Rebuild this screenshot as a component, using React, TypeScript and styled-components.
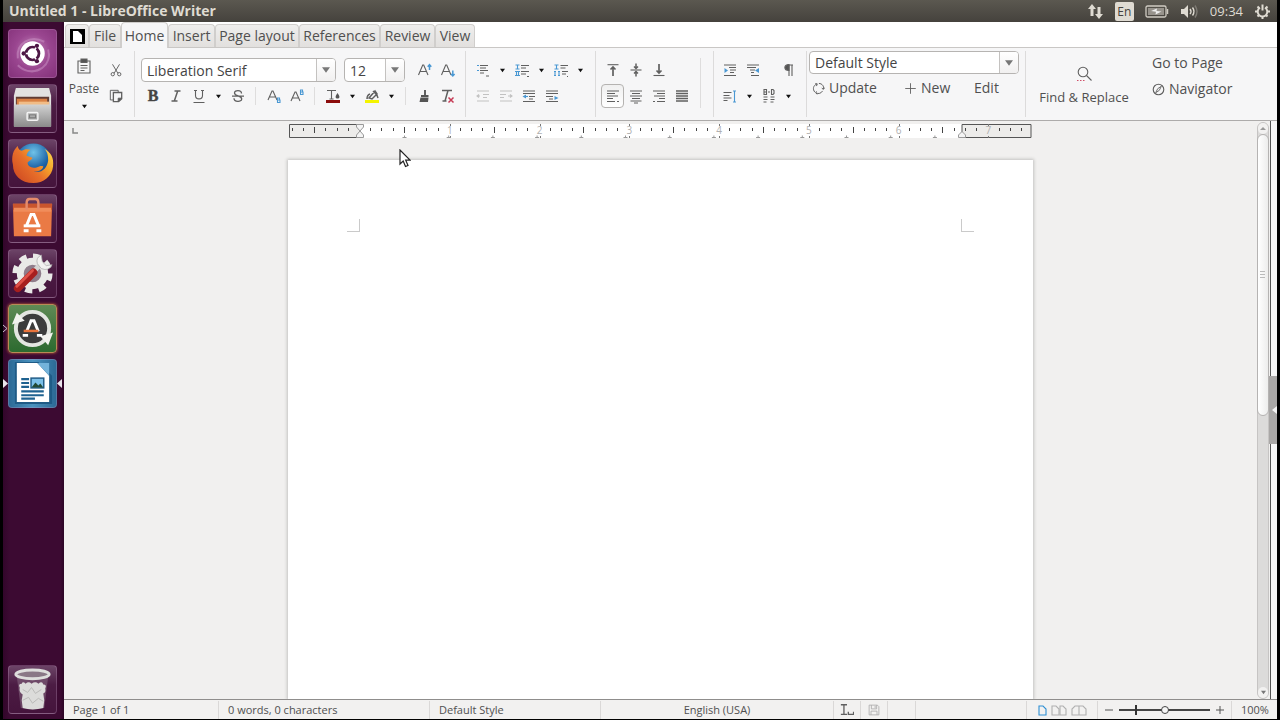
import React from 'react';
import styled, { createGlobalStyle, css } from 'styled-components';

const GlobalStyle = createGlobalStyle`
  * { box-sizing: border-box; }
  body { margin: 0; background: #000; overflow: hidden; }
  body, button, select, input { font-family: 'Open Sans', 'Noto Sans', sans-serif; }
  button { background: none; border: 0; padding: 0; color: inherit; font-size: inherit; line-height: inherit; }
  svg { display: block; flex: none; }
`;

const Desktop = styled.div`
  position: relative;
  display: flex;
  flex-direction: column;
  height: 100vh;
  border: solid #000;
  border-width: 0 3px 1px;
`;

/* Top panel */

const Panel = styled.header`
  display: flex;
  align-items: center;
  justify-content: space-between;
  height: 22px;
  flex: none;
  padding: 0 6px;
  background: linear-gradient(#5b5850, #45423d);
  color: #dfdbd2;
`;

const PanelTitle = styled.h1`
  margin: 0;
  font-size: 14px;
  line-height: 22px;
  font-weight: 700;
`;

const Indicators = styled.div`
  display: flex;
  align-items: center;
  gap: 11px;
`;

const Indicator = styled.button`
  display: flex;
  align-items: center;
  height: 20px;
  font-size: 13px;
`;

const Lang = styled.span`
  width: 19px;
  height: 19px;
  border-radius: 2px;
  background: #dfdbd2;
  color: #45423d;
  font-size: 12px;
  line-height: 19px;
  text-align: center;
`;

/* Launcher */

const Workspace = styled.div`
  display: flex;
  flex: 1;
  min-height: 0;
`;

const Launcher = styled.nav`
  display: flex;
  flex-direction: column;
  align-items: center;
  gap: 6px;
  width: 61px;
  flex: none;
  padding: 7px 2px 5px 0;
  background: linear-gradient(90deg, #32062a, #3c0a32 12%, #3c0a32 94%, #2c0525);
`;

const Tile = styled.button<{ $bg?: string; $glow?: boolean; $last?: boolean }>`
  position: relative;
  width: 49px;
  height: 49px;
  flex: none;
  border: 1px solid ${p => (p.$glow ? '#b98a55' : 'rgba(200, 160, 200, 0.28)')};
  border-radius: 4px;
  background: ${p => p.$bg ?? 'linear-gradient(#6c4467, #4c1c44 40%, #45143c)'};
  ${p => p.$glow && css`box-shadow: 0 0 3px #d2703a;`}
  ${p => p.$last && css`margin-top: auto;`}
`;

const Pip = styled.svg<{ $side: 'left' | 'right' }>`
  position: absolute;
  top: 19px;
  ${p => p.$side}: -7px;
`;

/* Writer window */

const Window = styled.main`
  display: flex;
  flex-direction: column;
  flex: 1;
  min-width: 0;
  background: #f1f0ef;
  color: #505050;
  font-size: 13px;
  line-height: 18px;
`;

const TabBar = styled.div`
  display: flex;
  align-items: flex-end;
  height: 26px;
  flex: none;
  padding-left: 1px;
  background: #fff;
  border-bottom: 1px solid #c9c7c5;
`;

const Tab = styled.button<{ $w: number; $active?: boolean }>`
  display: flex;
  align-items: center;
  justify-content: center;
  width: ${p => p.$w}px;
  height: 23px;
  border: 1px solid #d0cecc;
  border-bottom: 0;
  border-radius: 4px 4px 0 0;
  background: linear-gradient(#efeeed, #e2e0de);
  font-size: 14px;
  ${p => p.$active && css`
    height: 26px;
    margin-bottom: -1px;
    background: #f6f6f7;
  `}
`;

const Ribbon = styled.div`
  display: flex;
  height: 73px;
  flex: none;
  background: #f6f6f7;
  border-bottom: 1px solid #adabaa;
`;

const Group = styled.section<{ $w?: number; $pad?: number }>`
  display: flex;
  width: ${p => (p.$w ? p.$w + 'px' : 'auto')};
  flex: none;
  margin: 3px 0;
  padding-left: ${p => p.$pad ?? 5}px;
  border-right: 1px solid #dcdbdb;
  &:last-child { border-right: 0; }
`;

const Rows = styled.div`
  display: flex;
  flex-direction: column;
  padding-top: 6px;
`;

const Row = styled.div<{ $gap?: number }>`
  display: flex;
  align-items: center;
  gap: ${p => p.$gap ?? 0}px;
  height: 26px;
`;

const Tool = styled.button<{ $active?: boolean }>`
  display: flex;
  align-items: center;
  justify-content: center;
  width: 23px;
  height: 24px;
  border: 1px solid transparent;
  border-radius: 4px;
  ${p => p.$active && css`
    border-color: #b5b3b1;
    background: linear-gradient(#f0f0f0, #fff);
  `}
`;

const Arrow = styled.button`
  display: flex;
  justify-content: center;
  width: 16px;
`;

const Divider = styled.span<{ $tall?: boolean }>`
  width: 1px;
  height: ${p => (p.$tall ? 50 : 18)}px;
  margin: ${p => (p.$tall ? '7px 0 0 7px' : '0 6px')};
  background: #dedddd;
`;

const PasteButton = styled.button`
  display: flex;
  flex-direction: column;
  align-items: center;
  gap: 6px;
  width: 38px;
  padding: 7px 2px 0 0;
  font-size: 12px;
`;

const Combo = styled.span<{ $w: number; $h: number }>`
  display: grid;
  width: ${p => p.$w}px;
  height: ${p => p.$h}px;
  border: 1px solid #b6b4b2;
  border-radius: 4px;
  background: #fff;
  overflow: hidden;
  & > * { grid-area: 1 / 1; }
`;

const ComboSelect = styled.select`
  appearance: none;
  min-width: 0;
  border: 0;
  padding: 0 20px 0 5px;
  background: transparent;
  color: #444;
  font-size: 14px;
  outline: 0;
`;

const ComboArrow = styled.span`
  display: flex;
  align-items: center;
  justify-content: center;
  justify-self: end;
  width: 19px;
  border-left: 1px solid #c4c2c0;
  background: linear-gradient(#fff, #f1f0f0);
  pointer-events: none;
`;

const StyleSection = styled.section`
  flex: none;
  width: 219px;
  margin: 3px 0;
  padding-left: 2px;
  border-right: 1px solid #dcdbdb;
`;

const StyleGroup = styled.div`
  display: flex;
  flex-direction: column;
  gap: 4px;
  width: 210px;
`;

const StyleActions = styled.div`
  display: grid;
  grid-template-columns: 92px 70px 1fr;
  padding-left: 3px;
`;

const TextTool = styled.button`
  display: flex;
  align-items: center;
  gap: 4px;
  height: 20px;
  font-size: 14px;
`;

const FindButton = styled.button`
  display: flex;
  flex-direction: column;
  align-items: center;
  gap: 6px;
  width: 104px;
  padding-top: 15px;
`;

const NavLinks = styled.div`
  display: flex;
  flex-direction: column;
  gap: 6px;
  padding: 2px 0 0 16px;
`;

/* Document */

const Body = styled.div`
  display: flex;
  flex: 1;
  min-height: 0;
`;

const DocArea = styled.div`
  display: flex;
  flex-direction: column;
  align-items: center;
  flex: 1;
  min-width: 0;
  overflow: hidden;
`;

const RulerRow = styled.div`
  display: grid;
  grid-template-columns: 1fr auto 1fr;
  width: 100%;
  flex: none;
  height: 39px;
  padding: 3px 6px 0;
`;

const Page = styled.article`
  display: flex;
  justify-content: space-between;
  width: 745px;
  flex: 1;
  padding: 59px 59px 0;
  background: #fff;
  box-shadow: 0 0 3px 1px #c3c2c1;
`;

const Crop = styled.span<{ $side: 'left' | 'right' }>`
  width: 13px;
  height: 13px;
  border-bottom: 1px solid #cacaca;
  border-${p => (p.$side === 'left' ? 'right' : 'left')}: 1px solid #cacaca;
`;

const Scrollbar = styled.div`
  display: flex;
  flex-direction: column;
  width: 12px;
  flex: none;
  margin-top: 1px;
  border: 1px solid #c6c4c3;
  border-radius: 6px;
  background: #dcdbda;
`;

const ScrollStep = styled.button`
  display: flex;
  align-items: center;
  justify-content: center;
  height: 11px;
  border-radius: 6px;
  background: #f2f1f0;
`;

const Thumb = styled.div`
  display: flex;
  align-items: center;
  justify-content: center;
  flex: 281;
  border: 1px solid #b5b3b2;
  border-radius: 6px;
  margin: 0 -1px;
  background: linear-gradient(90deg, #fff, #ededec);
`;

const Track = styled.div`
  flex: 272;
`;

const Deck = styled.aside`
  display: flex;
  flex-direction: column;
  justify-content: center;
  width: 8px;
  flex: none;
  background: linear-gradient(90deg, #f1f0ef 1px, #555 1px, #555 2px, #f7f7f7 2px);
`;

const DeckHandle = styled.button`
  display: flex;
  align-items: center;
  justify-content: flex-end;
  height: 68px;
  background: #a9a7a6;
`;

/* Status bar */

const Status = styled.footer`
  display: flex;
  height: 20px;
  flex: none;
  padding: 1px 0 0;
  border-top: 1px solid #8f8d8c;
  background: #f2f1f0;
  font-size: 11px;
  line-height: 18px;
`;

const Cell = styled.div<{ $w?: number; $center?: boolean }>`
  display: flex;
  align-items: center;
  justify-content: ${p => (p.$center ? 'center' : 'flex-start')};
  gap: 4px;
  ${p => (p.$w ? `width: ${p.$w}px; flex: none;` : 'flex: 1;')}
  padding-left: ${p => (p.$center ? 0 : 9)}px;
  border-right: 1px solid #dad8d7;
  white-space: nowrap;
  &:last-child { border-right: 0; }
`;

const ZoomSlider = styled.input`
  appearance: none;
  width: 91px;
  height: 12px;
  margin: 0 2px;
  background:
    linear-gradient(#333, #333) 16px 1px / 2px 10px no-repeat,
    linear-gradient(#444, #444) 0 5px / 100% 2px no-repeat;
  &::-webkit-slider-thumb {
    appearance: none;
    width: 8px;
    height: 8px;
    border: 1px solid #444;
    border-radius: 50%;
    background: #f6f6f6;
  }
`;

const Pointer = styled.svg`
  position: absolute;
  left: 396px;
  top: 149px;
`;

/* Icons */

const Svg = ({ children, s = 16 }: { children: React.ReactNode; s?: number }) => (
  <svg width={s} height={s} viewBox="0 0 16 16" fill="none" stroke="#606060" strokeWidth="1.100" aria-hidden="true">{children}</svg>
);

const Down = ({ c = '#111', w = 5 }: { c?: string; w?: number }) => (
  <svg width={w} height={w} viewBox="0 0 6 6" aria-hidden="true"><path d="M0 1h6L3 5z" fill={c} /></svg>
);

const Drop = ({ label }: { label: string }) => <Arrow aria-label={label}><Down /></Arrow>;

const B = '#4a98d3';
const I: Record<string, React.ReactNode> = {
  cut: <Svg s={14}><path d="M4 1.500l6 10M12 1.500l-6 10" /><circle cx="4.300" cy="12.800" r="1.900" /><circle cx="11.700" cy="12.800" r="1.900" /></Svg>,
  copy: <Svg s={14}><path d="M4.500 12.500h-3v-11h9v2" /><path d="M5 4h9.500v7l-3.500 3.500H5z" strokeWidth="1.500" /><path d="M14.500 10.500h-4v4z" fill="#555" /></Svg>,
  bold: <Svg><text x="8" y="13" textAnchor="middle" fontFamily="Liberation Serif" fontWeight="700" fontSize="16" fill="#444" stroke="#444" strokeWidth=".4">B</text></Svg>,
  italic: <Svg><path d="M6.500 3h6M3.500 13h6M9.700 3l-3.400 10" strokeWidth="1.500" /></Svg>,
  underline: <Svg><path d="M3 2.500h3M10 2.500h3M4.500 2.500v5c0 4.500 7 4.500 7 0v-5M2.500 14.500h11" /></Svg>,
  strike: <Svg><path d="M11.500 5.500c0-3.800-7-3.700-7-.6 0 3.400 7.200 2.700 7.200 6 0 3.400-7.700 3.300-7.700-.6M2 8.200h12" strokeWidth="1.300" /></Svg>,
  sub: <Svg><path d="M2 12L6 3h1l4 9M3.500 9h6" /><path d="M11.500 9.500v5h2.500v-2.500h-2.500M11.500 10h2v2" stroke={B} /></Svg>,
  sup: <Svg><path d="M2 13L6 4h1l4 9M3.500 10h6" /><path d="M11.500 1.500v5h2.500V4h-2.500M11.500 2h2v2" stroke={B} /></Svg>,
  color: <Svg><path d="M2 2.500h9M6.500 2.500V11M4.500 11h4" /><path d="M12.500 5c3 4 2 5.500 0 5.500s-3-1.500 0-5.500z" fill="#555" stroke="none" /><path d="M1 13.500h14" stroke="#8b0c0c" strokeWidth="3" /></Svg>,
  mark: <Svg><path d="M3 11q0-4 3-5M5 10l6-7 2 3-5 5zM9 3l3 3M12.500 6l1.500 4" strokeWidth="1.500" /><path d="M1 13.500h14" stroke="#f4f400" strokeWidth="3" /></Svg>,
  brush: <Svg><path d="M9 2v5" strokeWidth="2" /><path d="M5 7h7.500v2H5zM4.500 9.500h8l-.5 4.500H3.500z" fill="#555" stroke="none" /></Svg>,
  clear: <Svg><path d="M3 2.500h10M9 2.500L6 13M3.500 13h4" strokeWidth="1.500" /><path d="M9.500 9.500l5 5M14.500 9.500l-5 5" stroke="#c63a55" strokeWidth="1.500" /></Svg>,
  grow: <Svg><path d="M1.500 13L5.700 3h1L11 13M3 9.500h6.500" /><path d="M12.500 8V3.500M10.700 4.700l1.800-2 1.800 2" stroke={B} strokeWidth="1.500" /></Svg>,
  shrink: <Svg><path d="M1.500 13L5.700 3h1L11 13M3 9.500h6.500" /><path d="M12.800 8.500V13M11 12l1.800 2 1.800-2" stroke={B} strokeWidth="1.500" /></Svg>,
  bullets: <Svg><path d="M5 3.500h8M5 6h6M5 8.500h8M5 11h4M11 14h3" /><path d="M2 3.500h2M2 8.500h2" stroke={B} /></Svg>,
  numbers: <Svg><path d="M7 3.500h8M7 6h5M7 9.500h8M7 12h5M13 14.500h2" /><path d="M1.500 3h4M3.500 3v4M1.500 7h4M1 9.500h5M2.500 9.500v4M4.500 9.500v4M1 13.500h5" stroke={B} /></Svg>,
  outline: <Svg><path d="M7.500 3.500h7.500M7.500 6h5M9 9.500h6M9 12h4M14 14.500h1" /><path d="M1.500 3h4M3.500 3v4M1.500 7h4M1 9.500h2M2 9.500v4M1 13.500h2M5 9.500h2M6 9.500v4M5 13.500h2" stroke={B} /></Svg>,
  promote: <Svg><path d="M2 3h12M8 6.500h6M8 9.500h4M2 13h12M2 8h3M4 6.500L2 8l2 1.500" stroke="#c2c2c2" /></Svg>,
  demote: <Svg><path d="M2 3h12M2 6.500h6M2 9.500h4M2 13h12M10 8h4M12 6.500L14 8l-2 1.500" stroke="#c2c2c2" /></Svg>,
  outdent: <Svg><path d="M2 3h12M2 5.500h12M8 8.500h6M8 11h4M2 13.500h12" /><path d="M1.500 8.500l3.500-2v4z" fill={B} stroke="none" /><path d="M4 8.500h3" stroke={B} /></Svg>,
  indent: <Svg><path d="M2 3h12M2 5.500h12M2 8.500h7M5 11h4M2 13.500h12" /><path d="M14.500 10l-4 2V8z" fill={B} stroke="none" /></Svg>,
  top: <Svg><path d="M2.500 2.700h11" /><path d="M8 14V4.500M5.500 7.500L8 5l2.500 2.500" strokeWidth="1.700" /></Svg>,
  middle: <Svg><path d="M2.500 8h11" /><path d="M8 1.500V7M8 9v5.500M6 4.500l2 2 2-2M6 11.500l2-2 2 2" strokeWidth="1.500" /></Svg>,
  bottom: <Svg><path d="M2.500 13.500h11" /><path d="M8 2v9M5.500 8.500L8 11l2.500-2.500" strokeWidth="1.700" /></Svg>,
  left: <Svg><path d="M2 3h12M2 5.500h8M2 8h11M2 10.500h6M2 13.500h8M12 13.500h2" /></Svg>,
  center: <Svg><path d="M2 3h12M4 5.500h8M2 8h12M4 10.500h8M2.500 13h11M6 15h4" /></Svg>,
  right: <Svg><path d="M2 3h12M6 5.500h8M3 8h11M8 10.500h6M2 13.500h2M6 13.500h8" /></Svg>,
  justify: <Svg><path d="M2 3h12M2 5.500h12M2 8h12M2 10.500h12M2 13h12" strokeWidth="1.400" /></Svg>,
  inc: <Svg><path d="M2 3h12M7 5.500h7M8 8h6M8 10.500h4M2 13.500h12" /><path d="M6 8.500L2.500 6v5z" fill={B} stroke="none" /></Svg>,
  dec: <Svg><path d="M2 3h12M2 5.500h9M5 8h5M6 10.500h3M6 13.500h8" /><path d="M10 8.500L14 6v5z" fill={B} stroke="none" /></Svg>,
  pilcrow: <Svg><path d="M8.500 3h4.500M9 3v11M12 3v11" /><path d="M9 2.500C3.500 2.500 3.500 8.500 9 8.500z" fill="#555" /></Svg>,
  spacing: <Svg><path d="M1.500 4.500h8M1.500 7.500h6M1.500 10h8M1.500 12.500h4" /><path d="M12.500 3v11M11 3h3M11 14h3" stroke={B} /></Svg>,
  wrap: <Svg><path d="M3 1.500v5h2.500v-5zM3 4h2.500M7 4h2M10.500 1.500v5h1.500l1-1v-3l-1-1z" /><path d="M2.500 9h4M2.500 11.500h4M2.500 14h3M9.500 9h4M9.500 11.500h4M9.500 14h3" /></Svg>,
  paste: <Svg><path d="M2 3h12v12H2z" /><path d="M5 1h6v3.500H5z" fill="#555" /><path d="M4.500 7.500h7M4.500 10h7M4.500 12.500h4" /></Svg>,
  update: <Svg s={13}><path d="M3.500 12.500C.5 9 1.500 4 6 2.500M4 2l2.500.3L5.500 5M8.500 1.800c4 0 6.500 3.500 5.700 7M15.500 7l-1.500 2-2-1.500M13 11c-1.700 3-5 4-8 2.500M5.500 11.500l-1 2 2 1.500" strokeWidth="1.200" /></Svg>,
  plus: <Svg s={13}><path d="M8 1.500v13M1.500 8h13" /></Svg>,
  nav: <Svg s={13}><circle cx="8" cy="8" r="6.500" strokeWidth="1.400" /><path d="M11.500 4L7 7l-2.500 5L9 9z" /></Svg>,
  find: <Svg><circle cx="7" cy="6" r="4.800" /><path d="M10.500 9.500l5 5" /><path d="M1 14.500h8" stroke="#d0506a" strokeDasharray="1.500 1.500" /></Svg>,
  insert: <Svg s={14}><path d="M1 2h7M4.500 2v11M1 13h7M9.500 10v3h6v-3" strokeWidth="1.500" /></Svg>,
  save: <Svg s={12}><path d="M1.500 1.500h11l2 2v11h-13zM4.500 1.500v5h7v-5M4 14.500v-5h8v5M9.500 2.500v3" stroke="#aaa" /></Svg>,
};

const T = ({ n, label, active }: { n: string; label: string; active?: boolean }) => (
  <Tool aria-label={label} title={label} $active={active}>{I[n]}</Tool>
);

const AppIcon = ({ children }: { children: React.ReactNode }) => (
  <svg width="47" height="47" viewBox="0 0 48 48" aria-hidden="true">{children}</svg>
);

const Sheet = ({ c, wide }: { c: string; wide?: boolean }) => (
  <svg width={wide ? 16 : 9} height="11" viewBox={wide ? '0 0 16 11' : '0 0 9 11'} fill="none" stroke={c} strokeWidth="1.100" aria-hidden="true">
    <path d="M1 1h4l3 3v6H1z" />
    {wide && <path d="M9 1h3l3 3v6H9z" />}
  </svg>
);

const BookSheet = () => (
  <svg width="16" height="11" viewBox="0 0 16 11" fill="none" stroke="#b0b0b0" strokeWidth="1.100" aria-hidden="true">
    <path d="M8 1H4L1 4v6h7zM8 1h4l3 3v6H8z" />
  </svg>
);

const Ruler = () => {
  const ticks = [];
  for (let i = -6; i <= 59; i++) {
    const x = 72 + i * 11.22;
    if (i === 0 || (i > 0 && i % 8 === 0) || x > 738) continue;
    const half = i % 4 === 0;
    ticks.push(<rect key={i} x={Math.round(x) - 1} y={half ? 3 : 4} width="1" height={half ? 6 : 3} fill="#444" />);
  }
  return (
    <svg width="745" height="16" viewBox="0 0 745 16" aria-label="Ruler">
      <rect x="72" y="0" width="603" height="14" fill="#fff" />
      <path d="M72 .5H1.500v13H72M674 13.500V.5h69v13z" fill="#edecea" stroke="#555" />
      {ticks}
      {[1, 2, 3, 4, 5, 6, 7].map(n => (
        <g key={n}>
          <text x={72 + n * 89.76} y="10" textAnchor="middle" fontSize="10" fontFamily="Open Sans" fill="#b0b0b0">{n}</text>
          <path d={`M${Math.round(72 + n * 89.76) + 0.5} 0v2M${Math.round(72 + n * 89.76) + 0.5} 12v2`} stroke="#777" />
        </g>
      ))}
      {Array.from({ length: 13 }, (_, k) => (
        <path key={k} d={`M${114.500 + k * 44.200} 13.500h4M${116.500 + k * 44.200} 11.500v2`} stroke="#999" />
      ))}
      <path d="M68.500 .5h7v2.500L72 7l-3.500-4zM68.500 13.500h7V11L72 7l-3.500 4zM670.500 13.500h7V11L674 7.500l-3.500 3.500z" fill="#f4f4f4" stroke="#999" />
    </svg>
  );
};

const tabs: [string, number][] = [
  ['File', 32], ['Home', 47], ['Insert', 47], ['Page layout', 84], ['References', 81], ['Review', 55], ['View', 40],
];

export default function App() {
  return (
    <Desktop>
      <GlobalStyle />
      <Panel>
        <PanelTitle>Untitled 1 - LibreOffice Writer</PanelTitle>
        <Indicators>
          <Indicator aria-label="Network">
            <svg width="17" height="17" viewBox="0 0 17 17" fill="#dfdbd2"><path d="M5 1L9 6H6.500v7h-3V6H1zM10.500 4h3v7H16l-4 5-4-5h2.500z" /></svg>
          </Indicator>
          <Indicator aria-label="Keyboard"><Lang>En</Lang></Indicator>
          <Indicator aria-label="Battery">
            <svg width="24" height="13" viewBox="0 0 24 13" fill="none" stroke="#cfcbc2"><rect x="1" y="1" width="20" height="11" rx="1.500" strokeWidth="1.300" /><rect x="3" y="3" width="16" height="7" fill="#97938c" stroke="none" /><path d="M22.500 4v5" strokeWidth="1.500" /><path d="M6 6l6-2.500-.5 2.500 5 .5-6 3 .5-2.700z" fill="#eee" stroke="none" /></svg>
          </Indicator>
          <Indicator aria-label="Sound">
            <svg width="19" height="15" viewBox="0 0 19 15" fill="none" stroke="#dfdbd2" strokeWidth="1.400"><path d="M1 5h3l4-4v13l-4-4H1z" fill="#dfdbd2" stroke="none" /><path d="M10 5q2 2.500 0 5M12.500 3.500q3 4 0 8" /><path d="M15 1.500q4 6 0 12" stroke="#7d7a73" /></svg>
          </Indicator>
          <Indicator>09:34</Indicator>
          <Indicator aria-label="System">
            <svg width="17" height="17" viewBox="0 0 17 17" fill="none" stroke="#dfdbd2">
              <path d="M6 4.600a4.800 4.800 0 1 0 5 0M8.500 1.500v6" strokeWidth="2" />
              <path d="M3.500 3.500l1.500 1.500M13.500 3.500L12 5M1 8.500h2.500M16 8.500h-2.500M3.500 13.500L5 12M13.500 13.500L12 12M8.500 13.500V16" strokeWidth="2" />
            </svg>
          </Indicator>
        </Indicators>
      </Panel>
      <Workspace>
        <Launcher aria-label="Launcher">
          <Tile aria-label="Dash" $bg="radial-gradient(circle at 50% 45%, #c58bbd, #9a4690 50%, #84327a)">
            <AppIcon>
              <path d="M9 29C7 13 22 5 36 12M40 20c4 16-11 27-26 20M9 36c12 12 32 5 32-12" fill="none" stroke="#c98fc2" strokeWidth="2" opacity=".55" />
              <circle cx="24" cy="24" r="12.500" fill="#fff" />
              <circle cx="24" cy="24" r="6.500" fill="none" stroke="#4d1745" strokeWidth="3" />
              <path d="M24 24H12M24 24l6-10M24 24l6 10" stroke="#fff" strokeWidth="1.600" />
              <circle cx="24" cy="24" r="5" fill="#fff" />
              <circle cx="15" cy="24" r="2.200" fill="#4d1745" /><circle cx="28.500" cy="16.200" r="2.200" fill="#4d1745" /><circle cx="28.500" cy="31.800" r="2.200" fill="#4d1745" />
            </AppIcon>
          </Tile>
          <Tile aria-label="Files">
            <AppIcon>
              <defs><linearGradient id="cab" x1="0" y1="0" x2="0" y2="1"><stop stopColor="#d2d2d2" /><stop offset="1" stopColor="#8a8a8a" /></linearGradient></defs>
              <path d="M7 3h34l2 8v31H5V11z" fill="#e2e2e0" />
              <path d="M7 12h34v10H7z" fill="#5f3c33" />
              <path d="M8 14h31v8H8z" fill="#d98043" /><path d="M10 17h31v5H10z" fill="#f1bc86" />
              <path d="M5 20h38v23H5z" fill="url(#cab)" />
              <rect x="18.500" y="28" width="11" height="8" rx="1" fill="none" stroke="#f4f4f4" strokeWidth="1.500" /><rect x="21" y="30.500" width="6" height="3" fill="none" stroke="#777" />
            </AppIcon>
          </Tile>
          <Tile aria-label="Firefox">
            <AppIcon>
              <defs>
                <radialGradient id="sea" cx=".5" cy=".25" r=".7"><stop stopColor="#6fc2e8" /><stop offset=".6" stopColor="#1f66a8" /><stop offset="1" stopColor="#143a78" /></radialGradient>
                <linearGradient id="fox" x1="1" y1="0" x2="0" y2=".8"><stop stopColor="#ffe35c" /><stop offset=".35" stopColor="#f5a62a" /><stop offset=".6" stopColor="#e8702a" /><stop offset="1" stopColor="#cf4a22" /></linearGradient>
              </defs>
              <circle cx="25" cy="22" r="18.500" fill="url(#sea)" />
              <path d="M4 14c1-4 3-6 5-8 0 3 2 4 4 5 3-2 6-2 9-1-3 2-4 4-4 6 2 1 4 1 6 2-1 3-4 3-5 5 0 4 4 6 9 5 3-1 5-2 7-1-1 4-6 6-11 5 9 3 15-3 16-11 0-6-1-9-4-12 7 4 10 9 9 18-1 10-10 17-20 17C12 44 4 36 4 25c-1-4-1-7 0-11z" fill="url(#fox)" />
            </AppIcon>
          </Tile>
          <Tile aria-label="Ubuntu Software">
            <AppIcon>
              <path d="M4 9h40l-1 33H5z" fill="#ea7a45" /><path d="M4 9h40v6H4z" fill="#c9552d" /><path d="M5 13h38v4H5z" fill="#f08d5b" />
              <path d="M18 15V8q0-4 3-4h6q3 0 3 4v7" fill="none" stroke="#e58b6b" strokeWidth="2.500" />
              <path d="M18 31l4.500-11h3L30 31" fill="none" stroke="#fff" strokeWidth="3" />
              <path d="M15 31.500h17" stroke="#fff" strokeWidth="3" />
              <path d="M15 36.500h5M28 36.500h5" stroke="#fff" strokeWidth="3" />
            </AppIcon>
          </Tile>
          <Tile aria-label="System Settings">
            <AppIcon>
              <circle cx="24" cy="24" r="17" fill="none" stroke="#e9e9e7" strokeWidth="7" strokeDasharray="7 6.350" />
              <circle cx="24" cy="24" r="12.500" fill="#8f7d8b" stroke="#e9e9e7" strokeWidth="7" />
              <path d="M21 26L34 13" stroke="#d5d5d3" strokeWidth="5" />
              <path d="M33 5q-6 3-4 9l4 5q8 3 11-4l-6 1-4-4z" fill="#f2f2f0" stroke="#a7a7a7" strokeWidth=".7" />
              <path d="M9 39L25 23" stroke="#a71f1f" strokeWidth="8" strokeLinecap="round" /><path d="M8 37L24 21" stroke="#df5148" strokeWidth="3" strokeLinecap="round" />
            </AppIcon>
          </Tile>
          <Tile aria-label="Software Updater" $glow $bg="linear-gradient(#5f8a55, #2c6a2f)">
            <Pip $side="left" width="6" height="9" viewBox="0 0 6 9" fill="none" stroke="#c9c4cf"><path d="M1 1l4 3.500L1 8" /></Pip>
            <AppIcon>
              <circle cx="24" cy="24" r="17" fill="#3c3c3c" stroke="#e4e6e1" strokeWidth="4" />
              <path d="M3 20L8 8l8 8zM45 28L40 41l-8-9z" fill="#f2f2ee" />
              <path d="M18 27l4.500-11h3L30 27" fill="none" stroke="#fff" strokeWidth="3" />
              <path d="M14 31h5.500M28.500 31H34" stroke="#fff" strokeWidth="3" /><path d="M15 26.500h15" stroke="#e8743c" strokeWidth="2.500" />
            </AppIcon>
          </Tile>
          <Tile aria-label="LibreOffice Writer" $bg="linear-gradient(90deg, #2c6a96, #4a93bf 50%, #2c6a96)">
            <Pip $side="left" width="6" height="9" viewBox="0 0 6 9" fill="#e9e4ec"><path d="M1 0l5 4.500L1 9z" /></Pip>
            <Pip $side="right" width="6" height="9" viewBox="0 0 6 9" fill="#e9e4ec"><path d="M5 0L0 4.500 5 9z" /></Pip>
            <AppIcon>
              <path d="M6 2h24l14 14v29H6z" fill="#1f5b86" /><path d="M8 3h21l12 13v27H8z" fill="#fff" />
              <path d="M29 3h12v13z" fill="#74b3da" />
              <path d="M12.500 19.500h8M12.500 23.500h8M12.500 27.500h8M12.500 32h23M12.500 36h23M12.500 39.500h14" stroke="#1f6290" strokeWidth="2.200" />
              <rect x="22.500" y="18.500" width="13" height="10" fill="#7cc0e8" stroke="#1f5b86" strokeWidth="1.500" /><path d="M23 28l4-5 3 3 2-2 3 4z" fill="#234a35" />
            </AppIcon>
          </Tile>
          <Tile aria-label="Trash" $last>
            <AppIcon>
              <path d="M8 11l4 32q12 3 24 0l4-32z" fill="#7a5a75" opacity=".7" />
              <path d="M11 22q-2-4 2-4 1-3 4 0 3-3 6 0 4-3 7 0 4-3 5 1 4 0 2 4 1 4-2 5l1 7-1 8q-11 3-21 0l-1-8 1-6q-4-2-3-7z" fill="#dcdcda" />
              <path d="M14 24l5 3 4-5 4 6 6-4M14 35l6-3 4 6 6-5 5 3" fill="none" stroke="#b9b9b7" />
              <ellipse cx="24" cy="8.500" rx="17" ry="4.500" fill="#8a7886" stroke="#dededc" strokeWidth="3" />
            </AppIcon>
          </Tile>
        </Launcher>

        <Window>
          <TabBar role="tablist">
            <Tab $w={24} aria-label="Menu">
              <svg width="15" height="15" viewBox="0 0 15 15"><rect width="15" height="15" fill="#000" /><path d="M3 2h5l4 4v7H3z" fill="#fff" /></svg>
            </Tab>
            {tabs.map(([name, w]) => (
              <Tab key={name} role="tab" aria-selected={name === 'Home'} $w={w} $active={name === 'Home'}>{name}</Tab>
            ))}
          </TabBar>

          <Ribbon>
            <Group $w={71} $pad={2} aria-label="Clipboard">
              <PasteButton>{I.paste}<span>Paste</span><Down /></PasteButton>
              <Rows>
                <Row><T n="cut" label="Cut" /></Row>
                <Row><T n="copy" label="Copy" /></Row>
              </Rows>
            </Group>

            <Group $w={331} $pad={6} aria-label="Font">
              <Rows>
                <Row $gap={8}>
                  <Combo $w={195} $h={24}>
                    <ComboSelect aria-label="Font name"><option>Liberation Serif</option></ComboSelect>
                    <ComboArrow><Down c="#777" w={8} /></ComboArrow>
                  </Combo>
                  <Combo $w={61} $h={24}>
                    <ComboSelect aria-label="Font size"><option>12</option></ComboSelect>
                    <ComboArrow><Down c="#777" w={8} /></ComboArrow>
                  </Combo>
                  <Row><T n="grow" label="Increase size" /><T n="shrink" label="Decrease size" /></Row>
                </Row>
                <Row>
                  <T n="bold" label="Bold" /><T n="italic" label="Italic" /><T n="underline" label="Underline" /><Drop label="Underline options" />
                  <T n="strike" label="Strikethrough" /><Divider />
                  <T n="sub" label="Subscript" /><T n="sup" label="Superscript" /><Divider />
                  <T n="color" label="Font color" /><Drop label="Font colors" /><T n="mark" label="Highlighting" /><Drop label="Highlighting colors" /><Divider />
                  <T n="brush" label="Clone formatting" /><T n="clear" label="Clear formatting" />
                </Row>
              </Rows>
            </Group>

            <Group $w={130} aria-label="Lists">
              <Rows>
                <Row><T n="bullets" label="Bullets" /><Drop label="Bullet styles" /><T n="numbers" label="Numbering" /><Drop label="Numbering styles" /><T n="outline" label="Outline" /><Drop label="Outline styles" /></Row>
                <Row><T n="promote" label="Promote" /><T n="demote" label="Demote" /><T n="outdent" label="Decrease indent" /><T n="indent" label="Increase indent" /></Row>
              </Rows>
            </Group>

            <Group $w={118} aria-label="Alignment">
              <Rows>
                <Row><T n="top" label="Top" /><T n="middle" label="Middle" /><T n="bottom" label="Bottom" /></Row>
                <Row><T n="left" label="Align left" active /><T n="center" label="Center" /><T n="right" label="Align right" /><T n="justify" label="Justify" /></Row>
              </Rows>
              <Divider $tall />
            </Group>

            <Group $w={93} $pad={4} aria-label="Paragraph">
              <Rows>
                <Row $gap={12}><Row><T n="inc" label="Increase spacing" /><T n="dec" label="Decrease spacing" /></Row><T n="pilcrow" label="Formatting marks" /></Row>
                <Row><T n="spacing" label="Line spacing" /><Drop label="Line spacing values" /><T n="wrap" label="Text direction" /><Drop label="Text directions" /></Row>
              </Rows>
            </Group>

            <StyleSection aria-label="Styles">
              <StyleGroup>
                <Combo $w={210} $h={23}>
                  <ComboSelect aria-label="Paragraph style"><option>Default Style</option></ComboSelect>
                  <ComboArrow><Down c="#777" w={8} /></ComboArrow>
                </Combo>
                <StyleActions>
                  <TextTool>{I.update}Update</TextTool>
                  <TextTool>{I.plus}New</TextTool>
                  <TextTool>Edit</TextTool>
                </StyleActions>
              </StyleGroup>
            </StyleSection>

            <Group $pad={6} aria-label="Edit">
              <FindButton>{I.find}<span>Find &amp; Replace</span></FindButton>
              <NavLinks>
                <TextTool>Go to Page</TextTool>
                <TextTool>{I.nav}Navigator</TextTool>
              </NavLinks>
            </Group>
          </Ribbon>

          <Body>
            <DocArea>
              <RulerRow>
                <svg width="10" height="12" viewBox="0 0 10 12" fill="none" stroke="#888" strokeWidth="1.500" aria-label="Tab type"><path d="M3 4v5h5" /></svg>
                <Ruler />
              </RulerRow>
              <Page aria-label="Document">
                <Crop $side="left" />
                <Crop $side="right" />
              </Page>
            </DocArea>
            <Scrollbar>
              <ScrollStep aria-label="Scroll up"><svg width="6" height="5" viewBox="0 0 6 5"><path d="M0 4l3-3 3 3z" fill="#999" /></svg></ScrollStep>
              <Thumb><svg width="6" height="7" viewBox="0 0 6 7"><path d="M0 .5h5M0 3.500h5M0 6.500h5" stroke="#bbb" /></svg></Thumb>
              <Track />
              <ScrollStep aria-label="Scroll down"><Down c="#777" /></ScrollStep>
            </Scrollbar>
            <Deck><DeckHandle aria-label="Show sidebar"><svg width="6" height="8" viewBox="0 0 6 8"><path d="M6 0L1 4l5 4z" fill="#f4f4f4" /></svg></DeckHandle></Deck>
          </Body>

          <Status>
            <Cell $w={155}>Page 1 of 1</Cell>
            <Cell $w={211}>0 words, 0 characters</Cell>
            <Cell $w={171}>Default Style</Cell>
            <Cell $center>English (USA)</Cell>
            <Cell $w={27} $center>{I.insert}</Cell>
            <Cell $w={27} $center>{I.save}</Cell>
            <Cell $w={28} />
            <Cell $w={111} />
            <Cell $w={71} $center><Sheet c="#2f8fd3" /><Sheet c="#b0b0b0" wide /><BookSheet /></Cell>
            <Cell $w={134} $center>
              <button aria-label="Zoom out"><svg width="8" height="8" viewBox="0 0 8 8"><path d="M0 4h8" stroke="#555" /></svg></button>
              <ZoomSlider type="range" aria-label="Zoom" defaultValue={50} />
              <button aria-label="Zoom in"><svg width="8" height="8" viewBox="0 0 8 8"><path d="M0 4h8M4 0v8" stroke="#555" /></svg></button>
            </Cell>
            <Cell $w={45}>100%</Cell>
          </Status>
        </Window>
      </Workspace>
      <Pointer width="12" height="19" viewBox="0 0 12 19" aria-hidden="true">
        <path d="M1 1v14l3.200-3L6.500 17.500l2.500-1L6.700 11.200H11z" fill="#fff" stroke="#222" strokeWidth="1.200" />
      </Pointer>
    </Desktop>
  );
}
